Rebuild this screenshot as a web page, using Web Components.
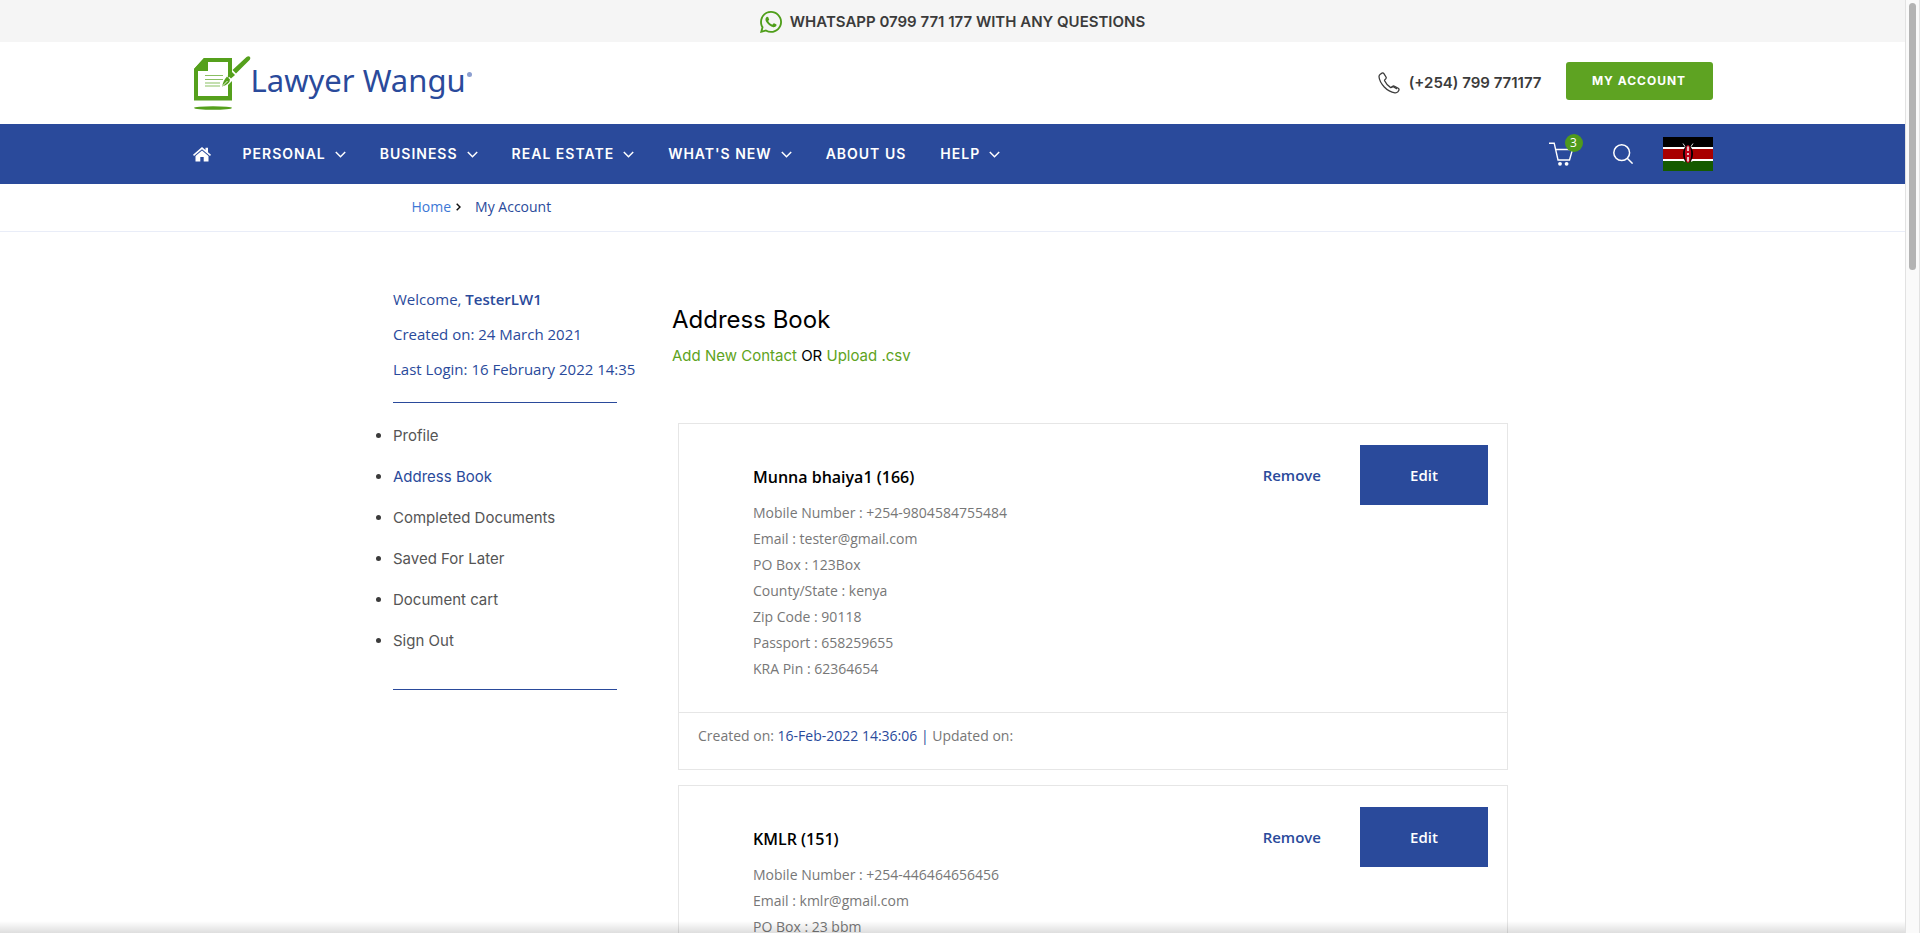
<!DOCTYPE html>
<html lang="en">
<head>
<meta charset="utf-8">
<title>Address Book - Lawyer Wangu</title>
<style>
  :root { --blue: #2a4a9b; --green: #5ea322; --head: Inter, "Open Sans", sans-serif; --text: "Open Sans", "Noto Sans", sans-serif; }
  body { margin: 0; font-family: var(--text); background: #fff; color: #3b3b3b; }
</style>
</head>
<body>
<page-frame>
  <top-notice>WHATSAPP 0799 771 177 WITH ANY QUESTIONS</top-notice>
  <site-header></site-header>
  <main-nav>
    <nav-item menu>PERSONAL</nav-item>
    <nav-item menu>BUSINESS</nav-item>
    <nav-item menu>REAL ESTATE</nav-item>
    <nav-item menu>WHAT'S NEW</nav-item>
    <nav-item>ABOUT US</nav-item>
    <nav-item menu>HELP</nav-item>
  </main-nav>
  <bread-crumb></bread-crumb>
  <account-layout>
    <account-sidebar slot="side"></account-sidebar>
    <address-heading></address-heading>
    <contact-card name="Munna bhaiya1 (166)" created="16-Feb-2022 14:36:06">
      <li>Mobile Number : +254-9804584755484</li>
      <li>Email : tester@gmail.com</li>
      <li>PO Box : 123Box</li>
      <li>County/State : kenya</li>
      <li>Zip Code : 90118</li>
      <li>Passport : 658259655</li>
      <li>KRA Pin : 62364654</li>
    </contact-card>
    <contact-card name="KMLR (151)">
      <li>Mobile Number : +254-446464656456</li>
      <li>Email : kmlr@gmail.com</li>
      <li>PO Box : 23 bbm</li>
    </contact-card>
  </account-layout>
</page-frame>
<script>
function define(name, html, setup) {
  const tpl = document.createElement('template');
  tpl.innerHTML = '<style>:host{display:block}*{box-sizing:border-box}a{color:inherit;text-decoration:none}</style>' + html;
  customElements.define(name, class extends HTMLElement {
    constructor() {
      super();
      this.attachShadow({ mode: 'open' }).append(tpl.content.cloneNode(true));
    }
    connectedCallback() { if (setup) setup(this, this.shadowRoot); }
  });
}

define('page-frame', `
<style>
  :host { display: grid; grid-template-columns: minmax(0, 1fr) 15px; height: 100vh; position: relative; }
  .view { overflow-y: auto; scrollbar-width: none; }
  .track { display: grid; grid-template-rows: 267fr 660fr; padding: 3px; background: #fafafa; border: solid #e2e2e2; border-width: 0 1px; }
  .thumb { border-radius: 4px; background: #b3b3b3; }
  .shade { position: absolute; left: 0; right: 15px; bottom: 0; height: 12px; background: linear-gradient(rgba(0,0,0,0), rgba(0,0,0,.13)); pointer-events: none; }
</style>
<div class="view"><slot></slot></div>
<div class="track"><div class="thumb"></div></div>
<div class="shade"></div>`);

define('top-notice', `
<style>
  :host { background: #f5f5f5; }
  a { display: flex; align-items: center; justify-content: center; gap: 8px; height: 42px; padding-top: 2px; font: 600 15px/24px var(--head); color: #3b3b3b; }
  svg { width: 22px; height: 22px; fill: #4f9e1a; }
</style>
<a href="#"><svg viewBox="0 32 448 448"><path d="M380.9 97.1C339 55.1 283.2 32 223.9 32c-122.4 0-222 99.6-222 222 0 39.1 10.2 77.3 29.6 111L0 480l117.7-30.9c32.4 17.7 68.9 27 106.1 27h.1c122.3 0 224.1-99.6 224.1-222 0-59.3-25.2-115-67.1-157zm-157 341.6c-33.2 0-65.7-8.9-94-25.7l-6.7-4-69.8 18.3L72 359.2l-4.4-7c-18.5-29.4-28.2-63.3-28.2-98.2 0-101.7 82.8-184.5 184.6-184.5 49.3 0 95.6 19.2 130.4 54.1 34.8 34.9 56.2 81.2 56.1 130.5 0 101.8-84.9 184.6-186.6 184.6zm101.2-138.2c-5.5-2.8-32.8-16.2-37.9-18-5.1-1.9-8.8-2.8-12.5 2.8-3.7 5.6-14.3 18-17.6 21.8-3.2 3.7-6.5 4.2-12 1.4-32.6-16.3-54-29.1-75.5-66-5.7-9.8 5.7-9.1 16.3-30.3 1.8-3.7.9-6.9-.5-9.7-1.4-2.8-12.5-30.1-17.1-41.2-4.5-10.8-9.1-9.3-12.5-9.5-3.2-.2-6.9-.2-10.6-.2-3.7 0-9.7 1.4-14.8 6.9-5.1 5.6-19.4 19-19.4 46.3 0 27.3 19.9 53.7 22.6 57.4 2.8 3.7 39.1 59.7 94.8 83.8 35.2 15.2 49 16.5 66.6 13.9 10.7-1.6 32.8-13.4 37.4-26.4 4.6-13 4.6-24.1 3.2-26.4-1.3-2.5-5-3.9-10.5-6.6z"/></svg><slot></slot></a>`);

define('site-header', `
<style>
  .row { display: flex; align-items: center; max-width: 1520px; margin: 0 auto; height: 82px; }
  .logo { display: flex; align-items: center; margin-right: auto; color: var(--blue); font: 400 31px/42px "Noto Sans", sans-serif; }
  .logo svg { width: 58px; height: 56px; }
  .logo span { padding-bottom: 6px; }
  .logo i { width: 5px; height: 5px; border-radius: 50%; margin: 0 0 18px 1px; background: #8c9fd0; }
  .tel { display: flex; align-items: center; gap: 9px; font: 600 15px/24px var(--head); color: #3b3b3b; margin-right: 24px; }
  .tel svg { width: 22px; height: 22px; fill: none; stroke: #3b3b3b; stroke-width: 1.3; }
  button { width: 147px; height: 38px; border: 0; border-radius: 3px; background: var(--green); color: #fff; font: 700 12px/18px var(--head); letter-spacing: 1px; padding: 0; margin-bottom: 4px; }
</style>
<div class="row">
  <a class="logo" href="#" aria-label="Lawyer Wangu">
    <svg viewBox="0 0 58 56">
      <g fill="#55a01c">
        <path fill-rule="evenodd" d="M11 3H39V19L35 23V7H15V16H5V41H35V30L39 26V45.500H1V14Z"/>
        <path d="M1 14 11 3H15V16H1Z"/>
        <ellipse cx="20" cy="53" rx="19" ry="1.700"/>
        <path d="M53.500 2q2-1.500 3.300-.2 1.200 1.200 0 3L43 18.500 39.500 15Z"/>
        <path d="M38.500 16.500 42 20 38 23.500 34.700 20.500Z"/>
        <path d="M34 21.500 37 24.500Q37 29 29 31.500 30.500 25 34 21.500Z"/>
      </g>
      <path d="M29.500 31 34.500 26" stroke="#fff" stroke-width=".9"/>
      <path d="M12 20.500H30M12 24.500H30M12 28H27M12 31H27" stroke="#8abf62" stroke-width="1.200"/>
    </svg>
    <span>Lawyer Wangu</span><i></i>
  </a>
  <a class="tel" href="tel:+254799771177">
    <svg viewBox="0 0 22 22"><path d="M2.300 2.200 4 1.100q1.100-.6 1.900.5L8 5q.6 1.100-.4 2-1.300 1-1 1.800 2 4.200 5.800 6.600.8.500 1.900-.7 1-1.200 2.200-.5l3.700 2.100q1.300.9.600 2.100l-1 1.500q-1 1.100-2.900.9Q11 20 6.300 15 1.400 9.500 1 4.700 1 3.100 2.300 2.200Z"/><path d="M13.200 15.400q1.300-1.200 2.500-.5l3.300 2" /></svg>
    <span>(+254) 799 771177</span>
  </a>
  <button>MY ACCOUNT</button>
</div>`);

define('main-nav', `
<style>
  :host { background: var(--blue); color: #fff; }
  nav { display: flex; align-items: center; max-width: 1520px; margin: 0 auto; height: 60px; }
  a { display: block; }
  svg { display: block; }
  .links { display: flex; gap: 34px; margin-left: 32px; margin-right: auto; }
  .tools { display: flex; align-items: center; }
  .cart { position: relative; margin-right: 40px; }
  .badge { position: absolute; left: 16px; top: -8px; width: 18px; height: 18px; border-radius: 50%; background: #4f9a1c; font: 400 12px/18px var(--text); text-align: center; }
  .find { margin-right: 30px; border: 0; padding: 0; background: none; }
</style>
<nav>
  <a href="#" aria-label="Home"><svg width="18" height="15" viewBox="0 0 18 15" fill="#fff"><path d="M9 0 12.500 3V.7H15V5.200L18 7.800 17 8.900 9 2.200 1 8.900 0 7.800Z"/><path d="M9 3.400 15.500 8.900V14.500H10.700V10H7.300V14.500H2.500V8.900Z"/></svg></a>
  <div class="links"><slot></slot></div>
  <div class="tools">
    <a class="cart" href="#" aria-label="Cart"><svg width="24" height="24" viewBox="0 0 24 24" fill="none" stroke="#fff" stroke-width="1.400"><path d="M0 1.200H5.200L9 18H20.500L23.500 7.500H6.600"/><circle cx="11" cy="21.800" r="1.900" fill="#fff" stroke="none"/><circle cx="17.600" cy="21.800" r="1.900" fill="#fff" stroke="none"/></svg><span class="badge">3</span></a>
    <button class="find" aria-label="Search"><svg width="20" height="20" viewBox="0 0 20 20" fill="none" stroke="#fff" stroke-width="1.500"><circle cx="8.700" cy="8.700" r="7.900"/><path d="M14.200 14.200 19.600 19.600"/></svg></button>
    <a href="#" aria-label="Kenya"><svg width="50" height="34" viewBox="0 0 50 34"><path fill="#fff" d="M0 0H50V34H0Z"/><path d="M0 0H50V10H0Z"/><path fill="#a80000" d="M0 12H50V22H0Z"/><path fill="#155a00" d="M0 24H50V34H0Z"/><path d="M20 6.500 22 9.500 29 25M30 6.500 28 9.500 21 25" fill="none" stroke="#ddd" stroke-width="1"/><ellipse cx="25" cy="17" rx="5" ry="8.500"/><ellipse cx="25" cy="17" rx="3.200" ry="9" fill="#c00018"/><path d="M25 9.500V14M25 16V18M25 20V24.500" stroke="#e8d0d0" stroke-width="1.800"/></svg></a>
  </div>
</nav>`);

define('nav-item', `
<style>
  a { display: flex; align-items: center; gap: 9px; font: 600 14px/24px var(--head); letter-spacing: 1px; }
  svg { display: none; }
  :host([menu]) svg { display: block; }
</style>
<a href="#"><span><slot></slot></span><svg width="11" height="7" viewBox="0 0 11 7" fill="none" stroke="#fff" stroke-width="1.500"><path d="M.8 1 5.500 5.700 10.200 1"/></svg></a>`);

define('bread-crumb', `
<style>
  nav { display: flex; align-items: center; height: 48px; border-bottom: 1px solid #e9edf8; padding: 0 0 2px calc(50% - 541px); font: 400 14px/20px var(--text); color: var(--blue); }
  .home { color: #3c77d6; margin-right: 5px; }
  svg { margin-right: 14px; }
</style>
<nav><a class="home" href="#">Home</a><svg width="5" height="8" viewBox="0 0 5 8" fill="none" stroke="#111" stroke-width="1.500"><path d="M.7.700 4 4 .7 7.300"/></svg><a href="#">My Account</a></nav>`);

define('account-layout', `
<style>
  :host { display: grid; grid-template-columns: 279px minmax(0, 836px); justify-content: center; padding: 55px 4px 16px 0; }
</style>
<slot name="side"></slot>
<div><slot></slot></div>`);

define('account-sidebar', `
<style>
  p { margin: 0 0 11px; font: 400 15px/24px var(--text); color: var(--blue); white-space: nowrap; }
  b { font-weight: 600; }
  .rule { width: 224px; border: 0; border-top: 1px solid var(--blue); margin: 21px 0 12px; }
  ul { margin: 0; padding: 0; }
  li { font: 400 15px/41px var(--head); color: #3b3b3b; }
  li a { color: #555; }
  li a.on { color: var(--blue); }
  .last { margin-top: 28px; }
</style>
<p>Welcome, <b>TesterLW1</b></p>
<p>Created on: 24 March 2021</p>
<p>Last Login: 16 February 2022 14:35</p>
<hr class="rule">
<ul>
  <li><a href="#">Profile</a></li>
  <li><a class="on" href="#">Address Book</a></li>
  <li><a href="#">Completed Documents</a></li>
  <li><a href="#">Saved For Later</a></li>
  <li><a href="#">Document cart</a></li>
  <li><a href="#">Sign Out</a></li>
</ul>
<hr class="rule last">`);

define('address-heading', `
<style>
  :host { padding: 15px 0 53px; color: #000; }
  h1 { margin: 0 0 4px; font: 400 24px/36px var(--head); }
  p { margin: 0; font: 400 15px/28px var(--head); }
  a { color: var(--green); }
</style>
<h1>Address Book</h1>
<p><a href="#">Add New Contact</a> OR <a href="#">Upload .csv</a></p>`);

define('contact-card', `
<style>
  :host { margin: 0 0 15px 6px; border: 1px solid #e6e6e6; }
  .body { display: flex; align-items: flex-start; padding: 21px 19px 30px 74px; }
  .info { flex: 1; padding-top: 20px; }
  h2 { margin: 0 0 11px; font: 600 16px/24px var(--text); color: #000; }
  ul { margin: 0; padding: 0; list-style: none; font: 400 14px/26px var(--text); color: #777; }
  button { height: 60px; border: 0; padding: 0; font: 600 15px/24px var(--text); }
  .remove { background: none; color: var(--blue); margin-right: 39px; }
  .edit { width: 128px; background: var(--blue); color: #fff; }
  .foot { border-top: 1px solid #e6e6e6; padding: 10px 19px 20px; font: 400 14px/26px var(--text); color: #777; }
  .foot span { color: var(--blue); }
</style>
<div class="body">
  <div class="info"><h2></h2><ul><slot></slot></ul></div>
  <button class="remove">Remove</button><button class="edit">Edit</button>
</div>
<div class="foot">Created on: <span><time></time> |</span> Updated on:</div>`, (el, root) => {
  root.querySelector('h2').textContent = el.getAttribute('name');
  if (el.hasAttribute('created')) root.querySelector('time').textContent = el.getAttribute('created');
  else root.querySelector('.foot').remove();
});
</script>
</body>
</html>
